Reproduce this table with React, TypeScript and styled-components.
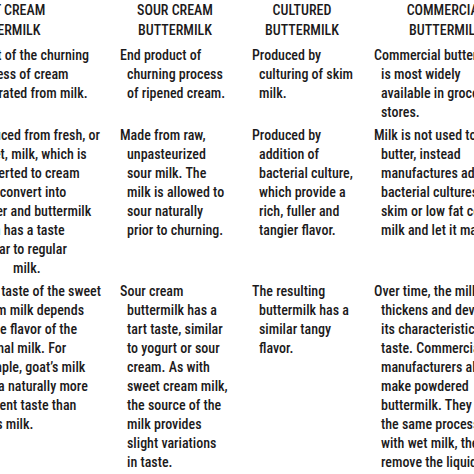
import styled, { createGlobalStyle } from 'styled-components';

const GlobalStyle = createGlobalStyle`
  html, body {
    margin: 0;
    padding: 0;
    background: #ffffff;
  }
`;

const Page = styled.div`
  width: 474px;
  height: 474px;
  overflow: hidden;
  background: #ffffff;
  color: #1c1a1b;
  font-family: 'Roboto Condensed', 'Roboto', 'DejaVu Sans Condensed', sans-serif;
  font-stretch: condensed;
  font-weight: 500;
  font-size: 14px;
`;

const Table = styled.div`
  display: grid;
  grid-template-columns: 155px 132px 122px 170px;
  row-gap: 4px;
  margin-left: -35px;
  width: max-content;
`;

const HeadCell = styled.div<{ $pull: number }>`
  margin-left: ${(p) => -p.$pull}px;
  margin-bottom: 2px;
  text-align: center;
  line-height: 20px;
  white-space: nowrap;
  text-transform: uppercase;
`;

const Cell = styled.div`
  line-height: 19px;
  white-space: nowrap;
`;

const Line = styled.div<{ $nudge: number }>`
  padding-left: 7px;
  margin-left: ${(p) => p.$nudge}px;
  &:first-child {
    padding-left: 0;
  }
`;

type Text = string | { text: string; nudge: number };

type Column = {
  title: string[];
  pull: number;
  rows: Text[][];
};

const columns: Column[] = [
  {
    title: ['Sweet Cream', 'Buttermilk'],
    pull: 78,
    rows: [
      [
        { text: 'Product of the churning', nudge: -7 },
        'process of cream',
        'separated from milk.',
      ],
      [
        { text: 'Produced from fresh, or', nudge: 3 },
        'sweet, milk, which is',
        'converted to cream',
        'then convert into',
        { text: 'butter and buttermilk', nudge: 2 },
        { text: 'which has a taste', nudge: -4 },
        'similar to regular',
        { text: 'milk.', nudge: 41 },
      ],
      [
        { text: 'The taste of the sweet', nudge: 12 },
        'cream milk depends',
        'on the flavor of the',
        'original milk. For',
        'example, goat\u2019s milk',
        { text: 'has a naturally more', nudge: 3 },
        'pungent taste than',
        'cow\u2019s milk.',
      ],
    ],
  },
  {
    title: ['Sour Cream', 'Buttermilk'],
    pull: 22,
    rows: [
      ['End product of', 'churning process', 'of ripened cream.'],
      [
        'Made from raw,',
        'unpasteurized',
        'sour milk. The',
        'milk is allowed to',
        'sour naturally',
        'prior to churning.',
      ],
      [
        'Sour cream',
        'buttermilk has a',
        'tart taste, similar',
        'to yogurt or sour',
        'cream. As with',
        'sweet cream milk,',
        'the source of the',
        'milk provides',
        'slight variations',
        'in taste.',
      ],
    ],
  },
  {
    title: ['Cultured', 'Buttermilk'],
    pull: 22,
    rows: [
      ['Produced by', 'culturing of skim', 'milk.'],
      [
        'Produced by',
        'addition of',
        'bacterial culture,',
        'which provide a',
        'rich, fuller and',
        'tangier flavor.',
      ],
      ['The resulting', 'buttermilk has a', 'similar tangy', 'flavor.'],
    ],
  },
  {
    title: ['Commercial', 'Buttermilk'],
    pull: 26,
    rows: [
      ['Commercial buttermilk', 'is most widely', 'available in grocery', 'stores.'],
      [
        'Milk is not used to make',
        'butter, instead',
        'manufactures add',
        'bacterial cultures to',
        'skim or low fat cow\u2019s',
        'milk and let it mature.',
      ],
      [
        'Over time, the milk',
        'thickens and develops',
        'its characteristic',
        'taste. Commercial',
        'manufacturers also',
        'make powdered',
        'buttermilk. They use',
        'the same process as',
        'with wet milk, then',
        'remove the liquid',
      ],
    ],
  },
];

export default function App() {
  return (
    <>
      <GlobalStyle />
      <Page>
        <Table>
          {columns.map((col) => (
            <HeadCell key={col.title.join()} $pull={col.pull}>
              {col.title.map((t) => (
                <div key={t}>{t}</div>
              ))}
            </HeadCell>
          ))}
          {[0, 1, 2].map((r) =>
            columns.map((col, c) => (
              <Cell key={`${r}-${c}`}>
                {col.rows[r].map((line, i) => {
                  const item = typeof line === 'string' ? { text: line, nudge: 0 } : line;
                  return (
                    <Line key={i} $nudge={item.nudge}>
                      {item.text}
                    </Line>
                  );
                })}
              </Cell>
            ))
          )}
        </Table>
      </Page>
    </>
  );
}
